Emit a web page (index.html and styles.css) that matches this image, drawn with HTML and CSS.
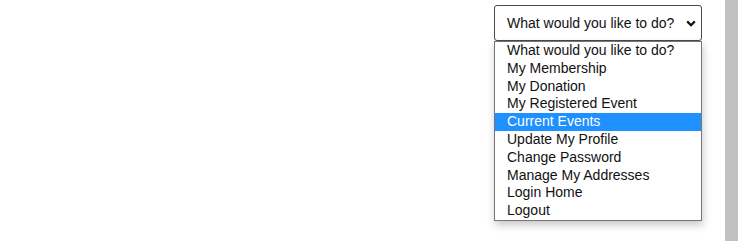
FILE: index.html
```html
<!DOCTYPE html>
<html lang="en">
<head>
    <meta charset="UTF-8">
    <meta name="viewport" content="width=device-width, initial-scale=1.0">
    <title>Member Actions</title>
    <link rel="stylesheet" href="styles.css">
</head>
<body>
    <div class="page">
        <div class="actions">
            <div class="select">
                <span class="select-label">What would you like to do?</span>
                <svg class="chevron" width="10" height="7" viewBox="0 0 10 7">
                    <path d="M1.2 1.4 L5 5.2 L8.8 1.4" fill="none" stroke="#111" stroke-width="2.2"/>
                </svg>
            </div>
            <ul class="options">
                <li>What would you like to do?</li>
                <li>My Membership</li>
                <li>My Donation</li>
                <li>My Registered Event</li>
                <li class="active">Current Events</li>
                <li>Update My Profile</li>
                <li>Change Password</li>
                <li>Manage My Addresses</li>
                <li>Login Home</li>
                <li>Logout</li>
            </ul>
        </div>
        <div class="scrollbar"></div>
    </div>
</body>
</html>
```

FILE: styles.css
```css
* {
    margin: 0;
    padding: 0;
    box-sizing: border-box;
}

body {
    background: #fff;
    font-family: "Liberation Sans", Arial, sans-serif;
    font-size: 14px;
    color: #111;
}

.page {
    display: flex;
    justify-content: flex-end;
    height: 100vh;
}

.actions {
    position: relative;
    width: 208px;
    margin-top: 5px;
    margin-right: 23px;
}

.select {
    display: flex;
    align-items: center;
    justify-content: space-between;
    height: 36px;
    padding: 0 5px 0 12px;
    border: 1px solid #4a4a4a;
    border-radius: 3px;
    background: #fff;
}

.chevron {
    margin-top: 1px;
}

.options {
    position: absolute;
    top: 36px;
    left: 0;
    width: 208px;
    list-style: none;
    background: #fff;
    border: 1px solid #767676;
    box-shadow: 1px 4px 8px rgba(0, 0, 0, 0.22);
}

.options li {
    height: 17.8px;
    line-height: 17.8px;
    padding-left: 12px;
    white-space: nowrap;
}

.options li.active {
    background: #1e90ff;
    color: #fff;
}

.scrollbar {
    width: 13px;
    margin-right: 2px;
    background: #c1c1c1;
}
```
